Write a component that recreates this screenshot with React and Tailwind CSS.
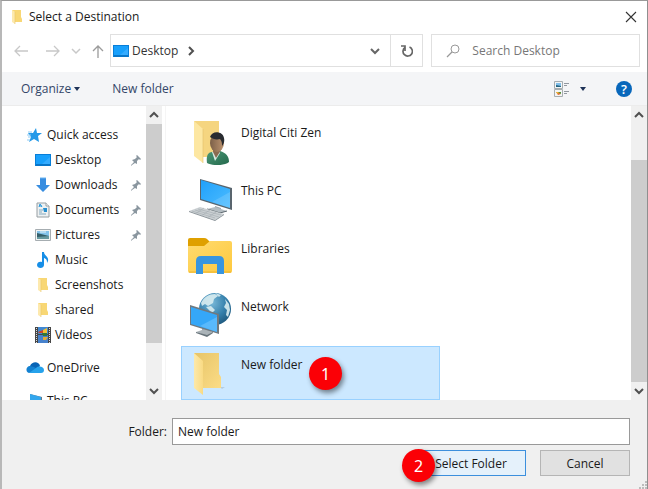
import { useState } from "react";

function Folder({ className }) {
  return (
    <svg viewBox="0 0 48 48" className={className} aria-hidden="true">
      <defs>
        <linearGradient id="folderBack" x1="0" y1="0" x2="1" y2="1">
          <stop offset="0" stopColor="#e6c468" />
          <stop offset="1" stopColor="#fbdc86" />
        </linearGradient>
        <linearGradient id="folderFront" x1="0" y1="0" x2="1" y2="0">
          <stop offset="0" stopColor="#fde9a9" />
          <stop offset="1" stopColor="#f9da83" />
        </linearGradient>
      </defs>
      <path d="M33 38h5l-3 2z" fill="#000" opacity=".12" />
      <path d="M7 4h25v21l2 3v11H14z" fill="url(#folderBack)" />
      <path d="M7 4l9 8v34l-9-7z" fill="url(#folderFront)" />
    </svg>
  );
}

function SmallFolder() {
  return (
    <svg viewBox="0 0 16 16" className="size-4" aria-hidden="true">
      <path d="M3 1h9v7l1 2v3H6z" fill="#f8d775" />
      <path d="M3 1l3 2v12l-3-2z" fill="#fde9ae" />
      <path d="M6 3v12" stroke="#e9c667" strokeWidth=".6" />
    </svg>
  );
}

function UserFolder() {
  return (
    <svg viewBox="0 0 48 48" className="size-12" aria-hidden="true">
      <defs>
        <linearGradient id="userShirt" x1="0" y1="0" x2="1" y2="1">
          <stop offset="0" stopColor="#4b9876" />
          <stop offset="1" stopColor="#24694c" />
        </linearGradient>
        <linearGradient id="userFace" x1="0" y1="0" x2="1" y2="0">
          <stop offset="0" stopColor="#7c6048" />
          <stop offset="1" stopColor="#bd9470" />
        </linearGradient>
      </defs>
      <path d="M7 4h25v36H14z" fill="#f5d580" />
      <path d="M7 4l9 8v34l-9-7z" fill="#fde7a2" />
      <path d="M16 12v34" stroke="#e3c16a" strokeWidth=".6" />
      <path d="M20 46c-1-7 1-11 5-11l8-1c6 2 9 5 9 11-5 4-16 4-22 1z" fill="url(#userShirt)" />
      <path d="M25 35l7-1 1 2-5 8z" fill="#d9ebe4" />
      <path d="M26 26h8v7l-5 8-3-6z" fill="#8b6b50" />
      <ellipse cx="30" cy="26" rx="7" ry="9" fill="url(#userFace)" />
      <path d="M23 20c2-7 13-6 14 1 1 4-1 7-2 8 0-2 0-5-2-7-4 1-7 0-10-2z" fill="#292c30" />
    </svg>
  );
}

function Computer() {
  return (
    <svg viewBox="0 0 48 48" className="size-12" aria-hidden="true">
      <defs>
        <linearGradient id="pcScreen" x1="0" y1="0" x2="1" y2="1">
          <stop offset="0" stopColor="#20a0fb" />
          <stop offset="1" stopColor="#4dbdff" />
        </linearGradient>
      </defs>
      <path d="M28 31l6 2v4l-6-2z" fill="#9da6ac" />
      <path d="M20 34l8-2 12 4-7 2z" fill="#b4bdc2" />
      <path d="M20 34l13 4 7-2" stroke="#5b666d" fill="none" />
      <path d="M13 4l32 9v22L13 25z" fill="#59656e" />
      <path d="M14 5l29 9v19L14 24z" fill="url(#pcScreen)" />
      <path d="M25 27l18-10v16z" fill="#fff" opacity=".14" />
      <path d="M2 36l11-4 24 7-9 6z" fill="#cbd0d3" />
      <path d="M2 36l26 9 9-6v1l-9 6-26-9z" fill="#899298" />
      <path d="M5 36l23 7M8 35l24 7M11 34l23 6M8 39l9-6M14 41l9-6M20 43l9-6" stroke="#a3abb0" strokeWidth=".6" fill="none" />
    </svg>
  );
}

function Libraries() {
  return (
    <svg viewBox="0 0 48 48" className="size-12" aria-hidden="true">
      <defs>
        <linearGradient id="libFront" x1="0" y1="0" x2="1" y2="1">
          <stop offset="0" stopColor="#ffdb70" />
          <stop offset="1" stopColor="#fec93e" />
        </linearGradient>
      </defs>
      <path d="M3 5q-2 0-2 2v20h22V9l-3-3q-1-1-3-1z" fill="#dfa000" />
      <path d="M1 13h16l6-5h20q2 0 2 2v28q0 2-2 2H3q-2 0-2-2z" fill="url(#libFront)" />
      <path d="M2 39h42" stroke="#edb431" />
      <path d="M9 41V28q0-5 5-5h18q5 0 5 5v13h-7V31H16v10z" fill="#3895df" />
    </svg>
  );
}

function Network() {
  return (
    <svg viewBox="0 0 48 48" className="size-12" aria-hidden="true">
      <defs>
        <radialGradient id="globe" cx=".4" cy=".3" r=".75">
          <stop offset="0" stopColor="#7abad9" />
          <stop offset=".6" stopColor="#347fab" />
          <stop offset="1" stopColor="#1d577c" />
        </radialGradient>
      </defs>
      <circle cx="28" cy="18" r="16" fill="url(#globe)" />
      <path d="M14 12c3-6 8-9 14-9l3 2-4 3-1 4-5 3-3-2-3 2zM38 8l4 5 1 6-2 7-2-2 1-5-3-3 2-4zM28 2l6 2-2 2zM19 16l5-1 4 4-3 3z" fill="#d9edf1" opacity=".9" />
      <path d="M15 37l7 2v3l-7-2z" fill="#9ca7ae" />
      <path d="M9 41l9-3 8 3-6 4z" fill="#aab3b8" />
      <path d="M9 41l11 3 6-3v1l-6 4-11-4z" fill="#68747b" />
      <path d="M3 14l29 9v20L3 34z" fill="#71797f" />
      <path d="M4 16l26 8v17L4 33z" fill="#35a7f8" />
      <path d="M13 35l17-9v15z" fill="#7dccff" opacity=".5" />
    </svg>
  );
}

function Desktop() {
  return (
    <svg viewBox="0 0 16 16" className="size-4" aria-hidden="true">
      <path d="M0 2h16v12H0z" fill="#087ed8" />
      <path d="M1 3h14v9H1z" fill="#18a0fc" />
      <path d="M7 12l8-7v7z" fill="#35acff" />
      <path d="M1 13h14" stroke="#0b6fb9" />
    </svg>
  );
}

function Star() {
  return (
    <svg viewBox="0 0 16 16" className="size-4" aria-hidden="true">
      <path d="M10 1l1 5h5l-4 3 1 6-5-3-5 3 2-5-3-4h5z" fill="#2399e8" />
      <path d="M2 5h4M1 8h4M2 10h3M1 13h3" stroke="#8dcbf4" />
    </svg>
  );
}

function Download() {
  return (
    <svg viewBox="0 0 16 16" className="size-4" aria-hidden="true">
      <path d="M5 1h6v7h4l-7 7-7-7h4z" fill="#388de0" />
      <path d="M5 1h6" stroke="#69b4f0" />
    </svg>
  );
}

function Document() {
  return (
    <svg viewBox="0 0 16 16" className="size-4" aria-hidden="true">
      <path d="M2 1h9l3 3v11H2z" fill="#eef1f2" stroke="#969ea2" />
      <path d="M11 1v3h3" fill="#fff" stroke="#969ea2" />
      <path d="M4 5l1-3 2 3M4 4h3" stroke="#2999dd" fill="none" />
      <path d="M4 8h4M4 10h3M4 12h7" stroke="#84a9bd" />
      <path d="M8 6h4v4H9z" fill="#278fce" />
    </svg>
  );
}

function Picture() {
  return (
    <svg viewBox="0 0 16 16" className="size-4" aria-hidden="true">
      <path d="M.5 2.5h15v11H.5z" fill="#f1f3f3" stroke="#a6adb1" />
      <path d="M2 4h12v8H2z" fill="#83c3ea" />
      <path d="M2 6l4 1 8 2v3H2z" fill="#345f6a" />
      <path d="M2 10l12-1v3H2z" fill="#67999f" />
      <path d="M5 5h6" stroke="#e7f4fa" />
    </svg>
  );
}

function Music() {
  return (
    <svg viewBox="0 0 16 16" className="size-4" aria-hidden="true">
      <path d="M7 0h2c0 4 5 4 4 9l-1 2c0-4-1-4-3-5v7c0 4-7 4-7 0 0-3 3-4 5-3z" fill="#168ee7" />
    </svg>
  );
}

function Video() {
  return (
    <svg viewBox="0 0 16 16" className="size-4" aria-hidden="true">
      <path d="M0 0h16v16H0z" fill="#464646" />
      <path d="M3 0h10v7H3z" fill="#4188d2" />
      <path d="M3 8h10v8H3z" fill="#4681cc" />
      <path d="M3 5l5-2 1 3H4z" fill="#c8472e" />
      <path d="M8 3l4-2v5H8z" fill="#f0bf36" />
      <path d="M7 6h5v3H8z" fill="#2f783a" />
      <path d="M8 10h5l-2 3H8z" fill="#e0aa36" />
      <path d="M1.5 1v15M14.5 1v15" stroke="#ddd" strokeDasharray="1 1" />
    </svg>
  );
}

function OneDrive() {
  return (
    <svg viewBox="0 0 18 12" className="h-3 w-[18px]" aria-hidden="true">
      <path d="M4 4c2-5 9-5 10 0l-5 5-8-2z" fill="#0864b6" />
      <path d="M4 4C0 4-1 10 3 11l10-3-5-3z" fill="#1381d1" />
      <path d="M3 11l7-5c3-3 8-1 8 2 0 2-1 3-3 3z" fill="#26a2eb" />
    </svg>
  );
}

function SmallComputer() {
  return (
    <svg viewBox="0 0 16 16" className="size-4" aria-hidden="true">
      <path d="M4 1l12 3v8L4 9z" fill="#687b87" />
      <path d="M4 1l11 3v7L4 8z" fill="#32a6ed" />
      <path d="M3 13l5-1 5 2-3 1z" fill="#9ca8af" />
    </svg>
  );
}

function Pin() {
  return (
    <svg viewBox="0 0 12 12" className="size-3" aria-hidden="true">
      <path d="M7 1l4 4-1 1-1-1-2 2v3L5 9 2 11 1 12l0-1 3-3-2-2 3-1 2-2-1-1z" fill="#8a969f" />
    </svg>
  );
}

function Chevron({ dir = "down", className = "text-[#505050]", width = 2 }) {
  const paths = { down: "M1 3l4 4 4-4", up: "M1 7l4-4 4 4", right: "M3 1l4 4-4 4" };
  return (
    <svg viewBox="0 0 10 10" className={`size-[10px] ${className}`} aria-hidden="true">
      <path d={paths[dir]} fill="none" stroke="currentColor" strokeWidth={width} />
    </svg>
  );
}

function Arrow({ dir }) {
  const paths = {
    left: "M14 7H1M6 2L1 7l5 5",
    right: "M0 7h13M8 2l5 5-5 5",
    up: "M7 14V2M2 7l5-5 5 5",
  };
  return (
    <svg viewBox="0 0 14 14" className="size-[14px]" aria-hidden="true">
      <path d={paths[dir]} fill="none" stroke="currentColor" strokeWidth="1.3" />
    </svg>
  );
}

function Caret() {
  return (
    <svg viewBox="0 0 6 4" className="h-1 w-[6px]" aria-hidden="true">
      <path d="M0 0h6L3 4z" fill="#1e3257" />
    </svg>
  );
}

const places = [
  { name: "Desktop", icon: Desktop, pinned: true },
  { name: "Downloads", icon: Download, pinned: true },
  { name: "Documents", icon: Document, pinned: true },
  { name: "Pictures", icon: Picture, pinned: true },
  { name: "Music", icon: Music },
  { name: "Screenshots", icon: SmallFolder },
  { name: "shared", icon: SmallFolder },
  { name: "Videos", icon: Video },
];

const items = [
  { name: "Digital Citi Zen", icon: <UserFolder /> },
  { name: "This PC", icon: <Computer /> },
  { name: "Libraries", icon: <Libraries /> },
  { name: "Network", icon: <Network /> },
  { name: "New folder", icon: <Folder className="size-12" />, badge: "1" },
];

function Badge({ children, className }) {
  return (
    <span
      className={`absolute flex size-[33px] items-center justify-center rounded-full bg-[#fb0006] font-['Noto_Sans',sans-serif] text-base text-white shadow-[2px_3px_5px_rgba(0,0,0,0.45)] ${className}`}
    >
      {children}
    </span>
  );
}

function ScrollBar({ thumb, label }) {
  return (
    <div className="flex w-4 shrink-0 flex-col bg-[#f0f0f0]">
      <button aria-label={`Scroll ${label} up`} className="flex h-[18px] shrink-0 items-center justify-center">
        <Chevron dir="up" />
      </button>
      <div className="flex min-h-0 flex-1 flex-col">{thumb}</div>
      <button aria-label={`Scroll ${label} down`} className="flex h-[18px] shrink-0 items-center justify-center">
        <Chevron />
      </button>
    </div>
  );
}

function Place({ name, icon: Icon, pinned, top }) {
  return (
    <button className={`flex h-[25px] w-full shrink-0 items-center pr-1 ${top ? "pl-6" : "pl-[33px]"}`}>
      <span className={`shrink-0 ${top ? "w-[21px]" : "w-5"}`}>
        <Icon />
      </span>
      <span className="flex-1 text-left">{name}</span>
      {pinned && <Pin />}
    </button>
  );
}

export default function App() {
  const [folder, setFolder] = useState("New folder");
  const [selected, setSelected] = useState("New folder");

  return (
    <main className="flex h-screen flex-col overflow-hidden border-t border-r border-l-2 border-t-[#999999] border-r-[#8f8f8f] border-l-[#b8b8b8] bg-white font-['Open_Sans','Noto_Sans',sans-serif] text-[12px] leading-4 text-[#1a1a1a]">
      <header className="flex h-[32px] shrink-0 items-center gap-1 pr-[10px] pl-[7px]">
        <SmallFolder />
        <h1 className="flex-1">Select a Destination</h1>
        <button aria-label="Close" className="flex size-3 items-center justify-center">
          <svg viewBox="0 0 12 12" className="size-3" aria-hidden="true">
            <path d="M1 1l10 10M11 1L1 11" stroke="#333" strokeWidth="1.1" />
          </svg>
        </button>
      </header>

      <nav aria-label="Location" className="flex h-[39px] shrink-0 items-start pt-px pr-[7px] pl-3">
        <div className="flex h-[34px] shrink-0 items-center text-[#c8c8c8]">
          <button aria-label="Back" className="w-8"><Arrow dir="left" /></button>
          <button aria-label="Forward" className="w-[25px]"><Arrow dir="right" /></button>
          <button aria-label="Recent locations" className="w-5">
            <Chevron className="text-[#c8c8c8]" width={1.5} />
          </button>
          <button aria-label="Up" className="w-[19px] text-[#9b9b9b]"><Arrow dir="up" /></button>
        </div>
        <div className="flex h-[33px] min-w-0 flex-1 border border-[#e0e0e0]">
          <button className="flex items-center gap-[3px] pl-[2px] text-[#333]">
            <Desktop />
            <span>Desktop</span>
          </button>
          <button aria-label="Show subfolders" className="flex items-center pl-2">
            <Chevron dir="right" />
          </button>
          <button aria-label="Previous locations" className="ml-auto flex items-center pr-[10px]">
            <Chevron className="text-[#666]" />
          </button>
          <button aria-label="Refresh" className="flex w-8 items-center justify-center border-l border-[#e0e0e0]">
            <svg viewBox="0 0 12 12" className="size-3" aria-hidden="true">
              <path d="M4 2.500A4.700 4.700 0 1 0 8.500 2" fill="none" stroke="#666" strokeWidth="1.7" />
              <path d="M0 1h4v5" fill="none" stroke="#666" strokeWidth="1.7" />
            </svg>
          </button>
        </div>
        <label className="ml-2 flex h-[33px] w-1/3 shrink-0 items-center gap-3 border border-[#e0e0e0] pl-[14px]">
          <svg viewBox="0 0 14 14" className="size-[14px] shrink-0" aria-hidden="true">
            <circle cx="9" cy="5" r="4" fill="none" stroke="#999" />
            <path d="M6 8l-5 5" stroke="#999" strokeWidth="1.2" />
          </svg>
          <input aria-label="Search Desktop" placeholder="Search Desktop" className="w-full min-w-0 outline-none placeholder:text-[#777]" />
        </label>
      </nav>

      <div role="toolbar" aria-label="Folder actions" className="flex h-[34px] shrink-0 items-center border-b border-[#ececec] bg-[#f4f5f7] pr-[15px] pl-[19px] text-[#334668]">
        <button className="flex items-center gap-[3px]">Organize <Caret /></button>
        <button className="ml-8">New folder</button>
        <button aria-label="Change your view" className="ml-auto flex items-center gap-[10px]">
          <svg viewBox="0 0 16 16" className="size-4" aria-hidden="true">
            <path d="M.5.5h8v7h-8zM.5 8.500h8v7h-8z" fill="#f4f5f5" stroke="#a6adb0" />
            <path d="M2 2h5v4H2z" fill="#82c0ec" />
            <path d="M2 4l5 1v1H2z" fill="#246581" />
            <path d="M2 11h3l2 2-3 1z" fill="#e06a2e" />
            <path d="M2 11l3 0-1 2z" fill="#e8bc36" />
            <path d="M4 11h3v2z" fill="#4d923d" />
            <path d="M10 2.500h5M10 4.500h3M10 10.500h5M10 12.500h3" stroke="#9298a0" />
          </svg>
          <Caret />
        </button>
        <button aria-label="Help" className="ml-[30px] flex size-4 items-center justify-center rounded-full bg-[#0867bb] text-[13px] font-semibold text-white">?</button>
      </div>

      <div className="flex min-h-0 flex-1">
        <nav aria-label="Folders" className="flex w-36 shrink-0 flex-col overflow-hidden pt-4">
          <Place name="Quick access" icon={Star} top />
          {places.map((place) => <Place key={place.name} {...place} />)}
          <div className="mt-2 flex shrink-0 flex-col gap-2">
            <Place name="OneDrive" icon={OneDrive} top />
            <Place name="This PC" icon={SmallComputer} top />
          </div>
        </nav>
        <ScrollBar label="folders" thumb={<div className="h-[85%] bg-[#cdcdcd]" />} />
        <ul aria-label="Desktop items" className="ml-[3px] flex min-w-0 flex-1 flex-col gap-1 border-l border-[#f5f5f5] pt-2 pl-[15px]">
          {items.map(({ name, icon, badge }) => (
            <li key={name} className="relative w-[259px] shrink-0">
              <button
                onClick={() => { setSelected(name); setFolder(name); }}
                className={`flex h-[54px] w-full items-start gap-[6px] border pt-[2px] pl-[5px] text-left ${selected === name ? "border-[#99d1ff] bg-[#cce8ff]" : "border-transparent"}`}
              >
                {icon}
                <span className="pt-2">{name}</span>
              </button>
              {badge && <Badge className="top-[11px] left-32">{badge}</Badge>}
            </li>
          ))}
        </ul>
        <ScrollBar label="items" thumb={<div className="mt-9 flex-1 bg-[#cdcdcd]" />} />
      </div>

      <footer className="flex h-[89px] shrink-0 flex-col bg-[#f0f0f0] pt-[18px]">
        <div className="flex items-center gap-[5px] pr-[17px]">
          <label htmlFor="folder" className="w-[165px] shrink-0 text-right">Folder:</label>
          <input
            id="folder"
            value={folder}
            onChange={(e) => setFolder(e.target.value)}
            className="h-[27px] min-w-0 flex-1 border border-[#999] bg-white px-[5px] outline-none"
          />
        </div>
        <div className="mt-[5px] flex justify-end gap-[14px] pr-[17px]">
          <div className="relative">
            <button className="h-[26px] w-[110px] border border-[#3c8fdd] bg-[#e5f1fb] pt-[2px]">Select Folder</button>
            <Badge className="-top-px -left-[14px]">2</Badge>
          </div>
          <button className="h-[26px] w-[90px] border border-[#b5b5b5] bg-[#e1e1e1] pt-[2px]">Cancel</button>
        </div>
        <svg viewBox="0 0 8 8" className="mt-auto ml-auto size-2 shrink-0" aria-hidden="true">
          <path d="M6 0h2v2H6zM3 3h2v2H3zM6 3h2v2H6zM0 6h2v2H0zM3 6h2v2H3zM6 6h2v2H6z" fill="#bcbcbc" />
        </svg>
      </footer>
    </main>
  );
}
